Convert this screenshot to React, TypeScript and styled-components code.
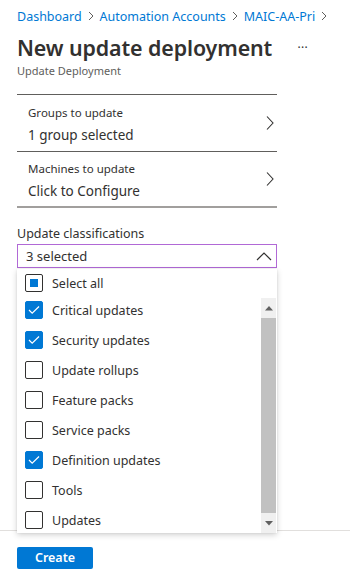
import React from "react";
import styled, { createGlobalStyle } from "styled-components";

const Global = createGlobalStyle`
  html, body { margin: 0; padding: 0; background: #fff; }
  body { font-family: "Segoe UI", "Noto Sans", "Open Sans", sans-serif; color: #323130; }
  * { box-sizing: border-box; }
`;

const Page = styled.div`
  width: 350px;
  height: 577px;
  display: flex;
  flex-direction: column;
  overflow: hidden;
`;

const Main = styled.div`
  flex: 1;
  padding: 0 17px;
`;

const Breadcrumb = styled.nav`
  display: flex;
  align-items: center;
  height: 20px;
  margin-top: 6px;
  font-size: 12.5px;
  white-space: nowrap;
`;

const Crumb = styled.a`
  color: #0078d4;
  text-decoration: none;
`;

const Sep = styled.span`
  display: inline-flex;
  width: 21px;
  justify-content: center;
  align-items: center;
`;

const TitleRow = styled.div`
  display: flex;
  align-items: center;
  margin-top: 6px;
  height: 30px;
`;

const Title = styled.h1`
  margin: 0;
  font-size: 21.4px;
  font-weight: 600;
  color: #323130;
  letter-spacing: -0.1px;
`;

const More = styled.span`
  margin-left: auto;
  margin-right: 25px;
  font-size: 12px;
  color: #323130;
  letter-spacing: 0.3px;
`;

const Subtitle = styled.div`
  font-size: 11px;
  color: #605e5c;
  margin-top: 1px;
`;

const Sections = styled.div`
  width: 260px;
  margin-top: 16px;
  border-top: 1px solid #605e5c;
`;

const Row = styled.div<{ $last?: boolean }>`
  display: flex;
  align-items: center;
  height: ${(p) => (p.$last ? 56 : 57)}px;
  padding: 0 2px 0 11px;
  border-bottom: ${(p) => (p.$last ? "2px solid #a19f9d" : "1px solid #605e5c")};
`;

const RowText = styled.div`
  flex: 1;
  display: flex;
  flex-direction: column;
  gap: 6px;
  padding-top: 2px;
`;

const RowLabel = styled.div`
  font-size: 11.5px;
  color: #323130;
`;

const RowValue = styled.div`
  font-size: 13.5px;
  color: #323130;
`;

const FieldLabel = styled.div`
  margin-top: 17px;
  font-size: 12.5px;
  color: #323130;
`;

const Field = styled.div`
  position: relative;
  width: 260px;
  margin-top: 2px;
`;

const Select = styled.div`
  height: 24px;
  border: 1px solid #b169d6;
  display: flex;
  align-items: center;
  padding: 0 4px 0 8px;
  font-size: 13px;
  color: #323130;
  justify-content: space-between;
`;

const Panel = styled.div`
  position: absolute;
  top: 25px;
  left: 0;
  width: 260px;
  height: 264px;
  background: #fff;
  box-shadow: 0 2px 6px rgba(0, 0, 0, 0.18), 0 0 2px rgba(0, 0, 0, 0.08);
  display: flex;
  flex-direction: column;
  padding-top: 2px;
  overflow: hidden;
`;

const OptionRow = styled.div<{ $h: number }>`
  display: flex;
  align-items: center;
  height: ${(p) => p.$h}px;
  flex: none;
  padding-left: 8px;
  gap: 9px;
  font-size: 12.5px;
  color: #323130;
  white-space: nowrap;
`;

const Body = styled.div`
  flex: 1;
  display: flex;
  min-height: 0;
`;

const List = styled.div`
  flex: 1;
  overflow: hidden;
`;

const Scrollbar = styled.div`
  width: 15px;
  margin: 3px 1px 0 0;
  background: #f0f0f0;
  display: flex;
  flex-direction: column;
`;

const Arrow = styled.div`
  height: 20px;
  display: flex;
  align-items: center;
  justify-content: center;
`;

const Thumb = styled.div`
  flex: 1;
  background: #c1c1c1;
`;

const Box = styled.span<{ $checked?: boolean }>`
  width: 18px;
  height: 18px;
  border-radius: 2px;
  flex: none;
  display: inline-flex;
  align-items: center;
  justify-content: center;
  background: ${(p) => (p.$checked ? "#0078d4" : "#fff")};
  border: 1px solid ${(p) => (p.$checked ? "#0078d4" : "#323130")};
`;

const Partial = styled.span`
  width: 8px;
  height: 8px;
  background: #0078d4;
`;

const Footer = styled.div`
  height: 47px;
  border-top: 1px solid #e1dfdd;
  padding: 14px 17px 0;
`;

const Button = styled.button`
  width: 76px;
  height: 22px;
  border: none;
  border-radius: 2px;
  background: #0078d4;
  color: #fff;
  font-family: inherit;
  font-size: 12.5px;
  font-weight: 600;
  padding: 0;
`;

const Chevron = () => (
  <svg width="10" height="16" viewBox="0 0 10 16">
    <polyline points="2,1.5 8,8 2,14.5" fill="none" stroke="#323130" strokeWidth="1.1" />
  </svg>
);

const SepChevron = () => (
  <svg width="6" height="10" viewBox="0 0 6 10">
    <polyline points="1,1 5,5 1,9" fill="none" stroke="#605e5c" strokeWidth="1" />
  </svg>
);

const Up = () => (
  <svg width="16" height="9" viewBox="0 0 16 9">
    <polyline points="1,8 8,1 15,8" fill="none" stroke="#323130" strokeWidth="1.2" />
  </svg>
);

const Check = () => (
  <svg width="12" height="10" viewBox="0 0 12 10">
    <polyline points="1,5 4.2,8.2 11,1.5" fill="none" stroke="#fff" strokeWidth="1.2" />
  </svg>
);

const Tri = ({ down }: { down?: boolean }) => (
  <svg width="8" height="5" viewBox="0 0 8 5">
    <polygon points={down ? "0,0 8,0 4,4.5" : "0,4.5 8,4.5 4,0"} fill="#606060" />
  </svg>
);

const items = [
  { label: "Critical updates", checked: true },
  { label: "Security updates", checked: true },
  { label: "Update rollups", checked: false },
  { label: "Feature packs", checked: false },
  { label: "Service packs", checked: false },
  { label: "Definition updates", checked: true },
  { label: "Tools", checked: false },
  { label: "Updates", checked: false },
];

export default function App() {
  return (
    <Page>
      <Global />
      <Main>
        <Breadcrumb>
          <Crumb>Dashboard</Crumb>
          <Sep>
            <SepChevron />
          </Sep>
          <Crumb>Automation Accounts</Crumb>
          <Sep>
            <SepChevron />
          </Sep>
          <Crumb>MAIC-AA-Pri</Crumb>
          <Sep>
            <SepChevron />
          </Sep>
        </Breadcrumb>
        <TitleRow>
          <Title>New update deployment</Title>
          <More>···</More>
        </TitleRow>
        <Subtitle>Update Deployment</Subtitle>
        <Sections>
          <Row>
            <RowText>
              <RowLabel>Groups to update</RowLabel>
              <RowValue>1 group selected</RowValue>
            </RowText>
            <Chevron />
          </Row>
          <Row $last>
            <RowText>
              <RowLabel>Machines to update</RowLabel>
              <RowValue>Click to Configure</RowValue>
            </RowText>
            <Chevron />
          </Row>
        </Sections>
        <FieldLabel>Update classifications</FieldLabel>
        <Field>
          <Select>
            <span>3 selected</span>
            <Up />
          </Select>
          <Panel>
            <OptionRow $h={24}>
              <Box>
                <Partial />
              </Box>
              Select all
            </OptionRow>
            <Body>
              <List>
                {items.map((it) => (
                  <OptionRow key={it.label} $h={30}>
                    <Box $checked={it.checked}>{it.checked && <Check />}</Box>
                    {it.label}
                  </OptionRow>
                ))}
              </List>
              <Scrollbar>
                <Arrow>
                  <Tri />
                </Arrow>
                <Thumb />
                <Arrow>
                  <Tri down />
                </Arrow>
              </Scrollbar>
            </Body>
          </Panel>
        </Field>
      </Main>
      <Footer>
        <Button>Create</Button>
      </Footer>
    </Page>
  );
}
